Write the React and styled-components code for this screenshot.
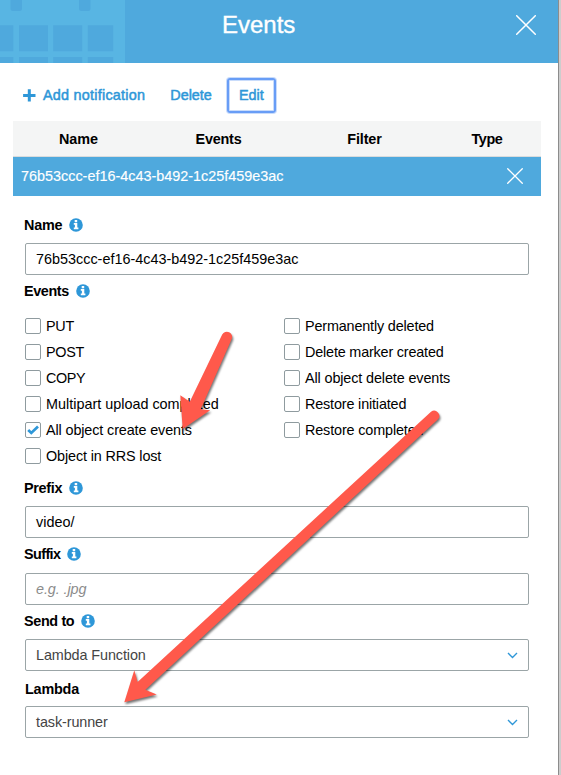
import React from 'react';
import styled, { createGlobalStyle } from 'styled-components';

const GlobalStyle = createGlobalStyle`
  *, *::before, *::after { box-sizing: border-box; }
  body {
    margin: 0;
    background: #fff;
    color: #111;
    font-family: "Liberation Sans", Arial, Helvetica, sans-serif;
    font-size: 14.4px;
    overflow: hidden;
  }
`;

const Page = styled.div`
  position: relative;
  display: flex;
  width: 561px;
  height: 775px;
  background: #cdcdcd;
  overflow: hidden;
`;

const Panel = styled.main`
  width: 559px;
  height: 775px;
  background: #fff;
  border-right: 1px solid #8c8c8c;
`;

const Header = styled.header`
  display: flex;
  height: 63px;
  background: #4fa9dd;
`;

const Title = styled.h1`
  flex: 1;
  margin: 0;
  padding-left: 97px;
  color: #fff;
  font-size: 24px;
  font-weight: 400;
  line-height: 50px;
  -webkit-text-stroke: 0.35px #fff;
`;

const CloseButton = styled.button`
  display: flex;
  padding: 0;
  border: 0;
  background: none;
  margin: ${(p) => p.$margin};
`;

const Toolbar = styled.nav`
  display: flex;
  align-items: center;
  height: 58px;
  padding: 6px 0 0 23px;
`;

const Action = styled.button`
  display: flex;
  align-items: center;
  gap: 7px;
  height: 35px;
  padding: 0;
  margin-right: ${(p) => p.$after || 0}px;
  border: 0;
  background: none;
  color: #2e97d8;
  font: 14.4px "Liberation Sans", Arial, sans-serif;
  -webkit-text-stroke: 0.5px #2e97d8;
  letter-spacing: ${(p) => p.$track || 0}px;
  white-space: nowrap;
`;

const FocusedAction = styled(Action)`
  justify-content: center;
  width: 49px;
  border: 2px solid #689df6;
  border-radius: 3px;
  box-shadow: 0 0 0 1px #c9dcfb, inset 0 0 0 1px #c9dcfb;
`;

const Table = styled.section`
  width: 528px;
  margin-left: 13px;
`;

const TableHead = styled.div`
  display: grid;
  grid-template-columns: 131px 149px 143px 102px;
  height: 36px;
  background: #f4f5f5;
  border-bottom: 1px solid #d9dcdd;
`;

const HeadCell = styled.div`
  color: #000;
  font-weight: 700;
  line-height: 36px;
  text-align: center;
  letter-spacing: ${(p) => p.$track || 0}px;
`;

const TableRow = styled.div`
  display: flex;
  justify-content: space-between;
  height: 39px;
  padding-left: 8px;
  background: #4fa9dd;
  color: #fff;
  line-height: 38px;
  -webkit-text-stroke: 0.15px #fff;
`;

const Form = styled.form`
  width: 504px;
  margin-left: 25px;
`;

const Label = styled.div`
  display: flex;
  align-items: center;
  gap: 7px;
  height: 18px;
  margin: ${(p) => p.$top}px 0 0 -1px;
  color: #000;
  font-weight: 700;
  letter-spacing: ${(p) => p.$track || 0}px;
`;

const Field = styled.div`
  display: flex;
  align-items: center;
  justify-content: space-between;
  height: 32px;
  margin-top: ${(p) => p.$top}px;
  padding: 0 10px;
  border: 1px solid #9ba5a7;
  border-radius: 2px;
  color: ${(p) => p.$color || '#000'};
  font-style: ${(p) => (p.$placeholder ? 'italic' : 'normal')};
  letter-spacing: ${(p) => p.$track || 0}px;
`;

const Options = styled.div`
  display: grid;
  grid-template-columns: 259px 245px;
  height: 156px;
  margin-top: 13px;
`;

const Column = styled.div`
  display: flex;
  flex-direction: column;
`;

const Option = styled.label`
  display: flex;
  align-items: center;
  gap: 5px;
  height: 26px;
  color: #000;
  white-space: nowrap;
  letter-spacing: ${(p) => p.$track || 0}px;
`;

const Box = styled.span`
  display: flex;
  align-items: center;
  justify-content: center;
  width: 16px;
  height: 16px;
  border: 1px solid #8f9b9f;
  border-radius: 2px;
`;

const Annotations = styled.svg`
  position: absolute;
  inset: 0;
  pointer-events: none;
  filter: drop-shadow(1px 2px 1.2px rgba(0, 0, 0, 0.55));
`;

const CalendarArt = () => (
  <svg width="125" height="63" viewBox="0 0 125 63">
    <rect width="125" height="63" fill="#58b5e3" />
    <g fill="#4fa9dd">
      <rect x="10.5" y="-6" width="11.5" height="17" rx="2.5" />
      <rect x="79" y="-6" width="11.5" height="17" rx="2.5" />
      <path d="M0 25.2h13.3v26H0zM19 25.2h29v26H19zM53.2 25.2h29v26h-29zM87.8 25.2h25.4v26H87.8zM0 57h13.3v6H0zM19 57h29v6H19zM53.2 57h29v6h-29zM87.8 57h25.4v6H87.8z" />
    </g>
  </svg>
);

const Cross = ({ size, stroke }) => (
  <svg width={size} height={size} viewBox={`0 0 ${size} ${size}`}>
    <path d={`M.7 .7L${size - 0.7} ${size - 0.7}M${size - 0.7} .7L.7 ${size - 0.7}`} stroke="#fff" strokeWidth={stroke} strokeLinecap="round" />
  </svg>
);

const PlusIcon = () => (
  <svg width="13" height="13" viewBox="0 0 13 13">
    <path d="M6.3 .2v12.4M.1 6.4h12.4" stroke="#2e97d8" strokeWidth="3" />
  </svg>
);

const Info = () => (
  <svg width="14" height="14" viewBox="0 0 14 14">
    <circle cx="7" cy="7" r="6.8" fill="#2e97d8" />
    <path d="M5.7 2.1h2.5v2.1H5.7zM4.8 5.1h3.5v4.4h1.1v1.8H4.8V9.5h1.1V6.8H4.8z" fill="#fff" />
  </svg>
);

const Check = () => (
  <svg width="12" height="10" viewBox="0 0 12 10">
    <path d="M1.2 5l3.1 3L11 1.6" fill="none" stroke="#2e97d8" strokeWidth="2.7" />
  </svg>
);

const Chevron = () => (
  <svg width="11" height="7" viewBox="0 0 11 7">
    <path d="M1 1l4.5 4.4L10 1" fill="none" stroke="#2e97d8" strokeWidth="1.4" />
  </svg>
);

const leftOptions = [
  { text: 'PUT', track: -0.3 },
  { text: 'POST', track: -0.3 },
  { text: 'COPY', track: -0.4 },
  { text: 'Multipart upload completed', track: 0 },
  { text: 'All object create events', track: -0.12, checked: true },
  { text: 'Object in RRS lost', track: -0.13 },
];

const rightOptions = [
  { text: 'Permanently deleted', track: -0.16 },
  { text: 'Delete marker created', track: -0.18 },
  { text: 'All object delete events', track: -0.12 },
  { text: 'Restore initiated', track: -0.16 },
  { text: 'Restore completed', track: -0.14 },
];

const OptionList = ({ items }) => (
  <Column>
    {items.map(({ text, track, checked }) => (
      <Option key={text} $track={track}>
        <Box>{checked && <Check />}</Box>
        {text}
      </Option>
    ))}
  </Column>
);

export default function App() {
  return (
    <Page>
      <GlobalStyle />
      <Panel>
        <Header>
          <CalendarArt />
          <Title>Events</Title>
          <CloseButton $margin="15px 22px 0 0" aria-label="Close"><Cross size={20} stroke={1.5} /></CloseButton>
        </Header>
        <Toolbar>
          <Action $after={25} $track={0.24}><PlusIcon />Add notification</Action>
          <Action $after={15}>Delete</Action>
          <FocusedAction>Edit</FocusedAction>
        </Toolbar>
        <Table>
          <TableHead>
            <HeadCell>Name</HeadCell>
            <HeadCell $track={-0.2}>Events</HeadCell>
            <HeadCell $track={-0.15}>Filter</HeadCell>
            <HeadCell $track={-0.4}>Type</HeadCell>
          </TableHead>
          <TableRow>
            76b53ccc-ef16-4c43-b492-1c25f459e3ac
            <CloseButton $margin="11px 18px 0 0" aria-label="Remove"><Cross size={16} stroke={1.3} /></CloseButton>
          </TableRow>
        </Table>
        <Form>
          <Label $top={20} $track={-0.2}>Name<Info /></Label>
          <Field $top={9}>76b53ccc-ef16-4c43-b492-1c25f459e3ac</Field>
          <Label $top={7} $track={-0.4}>Events<Info /></Label>
          <Options>
            <OptionList items={leftOptions} />
            <OptionList items={rightOptions} />
          </Options>
          <Label $top={10} $track={-0.3}>Prefix<Info /></Label>
          <Field $top={9}>video/</Field>
          <Label $top={7} $track={-0.6}>Suffix<Info /></Label>
          <Field $top={10} $color="#8b8b8b" $track={-0.1} $placeholder>e.g. .jpg</Field>
          <Label $top={7} $track={-0.35}>Send to<Info /></Label>
          <Field $top={9} $color="#444" $track={-0.1}>Lambda Function<Chevron /></Field>
          <Label $top={9} $track={-0.2}><span>&#8202;Lambda</span></Label>
          <Field $top={8} $color="#444" $track={-0.1}>task-runner<Chevron /></Field>
        </Form>
      </Panel>
      <Annotations width="561" height="775" viewBox="0 0 561 775">
        <g fill="#ff594b">
          <path d="M222.2 334.6A5.2 5.2 0 0 1 231.6 339.2L200.7 409.3L210.2 410.3L182.7 429L180.3 395.3L189.8 401.7Z" />
          <path d="M431 411.7A5.2 5.2 0 0 1 438 419.3L145.3 689.8L156.7 694.5L124.3 702.3L134.3 670.2L137.6 681.9Z" />
        </g>
      </Annotations>
    </Page>
  );
}
